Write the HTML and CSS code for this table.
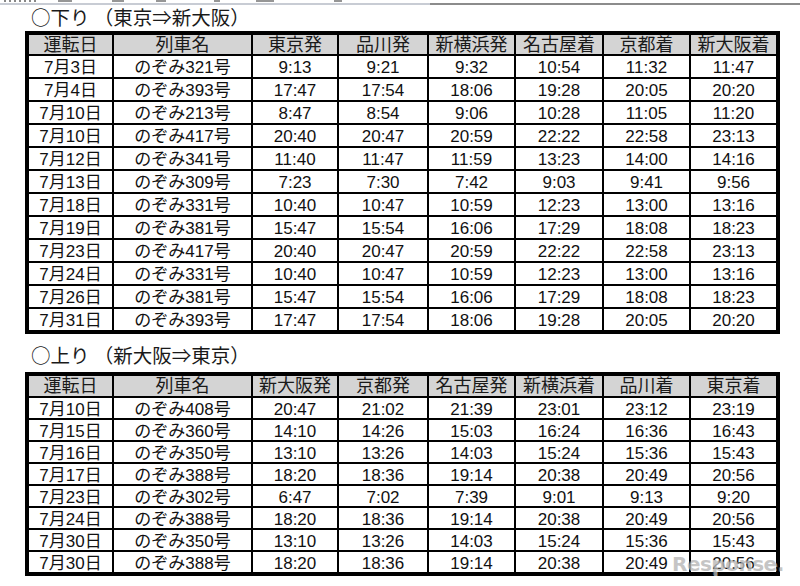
FILE: index.html
```html
<!DOCTYPE html>
<html lang="ja">
<head>
<meta charset="utf-8">
<title>臨時列車時刻</title>
<link rel="stylesheet" href="styles.css">
</head>
<body>
<div class="topbar">
  <div class="frags">
    <span class="frag f1"></span><span class="frag f2"></span><span class="frag f3"></span><span class="frag f4"></span><span class="frag f5"></span><span class="frag f6"></span><span class="frag f7"></span>
  </div>
  <div class="rule"><span class="rule-dark"></span></div>
</div>

<h2 class="title title-down">○下り （東京⇒新大阪）</h2>
<table class="tt tt-down">
  <thead>
    <tr><th class="c1">運転日</th><th class="c2">列車名</th><th class="c3">東京発</th><th class="c4">品川発</th><th class="c5">新横浜発</th><th class="c6">名古屋着</th><th class="c7">京都着</th><th class="c8">新大阪着</th></tr>
  </thead>
  <tbody>
    <tr><td>7月3日</td><td>のぞみ321号</td><td>9:13</td><td>9:21</td><td>9:32</td><td>10:54</td><td>11:32</td><td>11:47</td></tr>
    <tr><td>7月4日</td><td>のぞみ393号</td><td>17:47</td><td>17:54</td><td>18:06</td><td>19:28</td><td>20:05</td><td>20:20</td></tr>
    <tr><td>7月10日</td><td>のぞみ213号</td><td>8:47</td><td>8:54</td><td>9:06</td><td>10:28</td><td>11:05</td><td>11:20</td></tr>
    <tr><td>7月10日</td><td>のぞみ417号</td><td>20:40</td><td>20:47</td><td>20:59</td><td>22:22</td><td>22:58</td><td>23:13</td></tr>
    <tr><td>7月12日</td><td>のぞみ341号</td><td>11:40</td><td>11:47</td><td>11:59</td><td>13:23</td><td>14:00</td><td>14:16</td></tr>
    <tr><td>7月13日</td><td>のぞみ309号</td><td>7:23</td><td>7:30</td><td>7:42</td><td>9:03</td><td>9:41</td><td>9:56</td></tr>
    <tr><td>7月18日</td><td>のぞみ331号</td><td>10:40</td><td>10:47</td><td>10:59</td><td>12:23</td><td>13:00</td><td>13:16</td></tr>
    <tr><td>7月19日</td><td>のぞみ381号</td><td>15:47</td><td>15:54</td><td>16:06</td><td>17:29</td><td>18:08</td><td>18:23</td></tr>
    <tr><td>7月23日</td><td>のぞみ417号</td><td>20:40</td><td>20:47</td><td>20:59</td><td>22:22</td><td>22:58</td><td>23:13</td></tr>
    <tr><td>7月24日</td><td>のぞみ331号</td><td>10:40</td><td>10:47</td><td>10:59</td><td>12:23</td><td>13:00</td><td>13:16</td></tr>
    <tr><td>7月26日</td><td>のぞみ381号</td><td>15:47</td><td>15:54</td><td>16:06</td><td>17:29</td><td>18:08</td><td>18:23</td></tr>
    <tr><td>7月31日</td><td>のぞみ393号</td><td>17:47</td><td>17:54</td><td>18:06</td><td>19:28</td><td>20:05</td><td>20:20</td></tr>
  </tbody>
</table>

<h2 class="title title-up">○上り （新大阪⇒東京）</h2>
<table class="tt tt-up">
  <thead>
    <tr><th class="c1">運転日</th><th class="c2">列車名</th><th class="c3">新大阪発</th><th class="c4">京都発</th><th class="c5">名古屋発</th><th class="c6">新横浜着</th><th class="c7">品川着</th><th class="c8">東京着</th></tr>
  </thead>
  <tbody>
    <tr><td>7月10日</td><td>のぞみ408号</td><td>20:47</td><td>21:02</td><td>21:39</td><td>23:01</td><td>23:12</td><td>23:19</td></tr>
    <tr><td>7月15日</td><td>のぞみ360号</td><td>14:10</td><td>14:26</td><td>15:03</td><td>16:24</td><td>16:36</td><td>16:43</td></tr>
    <tr><td>7月16日</td><td>のぞみ350号</td><td>13:10</td><td>13:26</td><td>14:03</td><td>15:24</td><td>15:36</td><td>15:43</td></tr>
    <tr><td>7月17日</td><td>のぞみ388号</td><td>18:20</td><td>18:36</td><td>19:14</td><td>20:38</td><td>20:49</td><td>20:56</td></tr>
    <tr><td>7月23日</td><td>のぞみ302号</td><td>6:47</td><td>7:02</td><td>7:39</td><td>9:01</td><td>9:13</td><td>9:20</td></tr>
    <tr><td>7月24日</td><td>のぞみ388号</td><td>18:20</td><td>18:36</td><td>19:14</td><td>20:38</td><td>20:49</td><td>20:56</td></tr>
    <tr><td>7月30日</td><td>のぞみ350号</td><td>13:10</td><td>13:26</td><td>14:03</td><td>15:24</td><td>15:36</td><td>15:43</td></tr>
    <tr><td>7月30日</td><td>のぞみ388号</td><td>18:20</td><td>18:36</td><td>19:14</td><td>20:38</td><td>20:49</td><td>20:56</td></tr>
  </tbody>
</table>

<div class="watermark">Response.</div>
</body>
</html>
```

FILE: styles.css
```css
html, body {
  margin: 0;
  padding: 0;
  background: #ffffff;
}

body {
  position: relative;
  width: 800px;
  height: 586px;
  overflow: hidden;
  font-family: "Liberation Sans", "Noto Sans CJK JP", sans-serif;
  color: #111111;
}

/* cut-off strip at the very top */
.topbar {
  height: 5px;
}

.frags {
  display: flex;
  height: 2px;
  padding-left: 4px;
}

.frag {
  display: block;
  height: 2px;
  background: #6a6a6a;
  opacity: 0.7;
}

.f1 { width: 34px; margin-right: 20px; background: repeating-linear-gradient(90deg, #555 0 2px, transparent 2px 5px); }
.f2 { width: 14px; margin-right: 40px; }
.f3 { width: 12px; margin-right: 32px; }
.f4 { width: 10px; margin-right: 48px; }
.f5 { width: 6px; margin-right: 36px; }
.f6 { width: 18px; margin-right: 60px; }
.f7 { width: 8px; margin-right: 0; }

.rule {
  height: 2px;
  margin-top: 1px;
  background: #c8ccd4;
  display: flex;
  justify-content: flex-end;
}

.rule-dark {
  display: block;
  width: 370px;
  height: 2px;
  background: #8c8c8c;
}

/* section titles */
.title {
  margin: 0;
  padding-left: 31px;
  font-family: "Noto Sans CJK JP", sans-serif;
  font-weight: normal;
  font-size: 19.5px;
  line-height: 23px;
  color: #1a1a1a;
}

.title-down {
  margin-bottom: 3px;
}

.title-up {
  margin-top: 9px;
  margin-bottom: 6px;
}

/* timetables */
.tt {
  margin-left: 25px;
  width: 755px;
  table-layout: fixed;
  border-collapse: separate;
  border-spacing: 0;
  border: 4px solid #000;
  font-size: 17px;
}

.tt th,
.tt td {
  box-sizing: border-box;
  padding: 3px 0 0;
  text-align: center;
  vertical-align: top;
  font-weight: normal;
  white-space: nowrap;
  border-right: 2px solid #000;
  border-bottom: 2px solid #000;
}

.tt th:last-child,
.tt td:last-child {
  border-right: 0;
}

.tt tbody tr:last-child td {
  border-bottom: 0;
}

.tt th {
  background: #d4d4d4;
  font-size: 18px;
  padding-top: 1px;
  line-height: 18px;
  height: 21px;
  color: #1a1a1a;
}

.tt td {
  line-height: 18px;
  height: 23px;
}

.tt-up th {
  height: 22px;
}

.tt-up td {
  height: 22px;
  line-height: 17px;
}

.tt tbody tr:last-child td {
  height: 21px;
}

.tt-up tbody tr:last-child td {
  height: 20px;
}

.c1 { width: 85px; }
.c2 { width: 139px; }
.c3 { width: 86px; }
.c4 { width: 90px; }
.c5 { width: 87px; }
.c6 { width: 88px; }
.c7 { width: 87px; }
.c8 { width: 85px; }

/* watermark */
.watermark {
  position: absolute;
  left: 672px;
  top: 553px;
  font-family: "DejaVu Sans", sans-serif;
  font-size: 20px;
  line-height: 22px;
  font-weight: bold;
  letter-spacing: -0.5px;
  color: rgba(140, 140, 140, 0.5);
  text-shadow: 1px 1px 0 rgba(255, 255, 255, 0.6);
}
```
